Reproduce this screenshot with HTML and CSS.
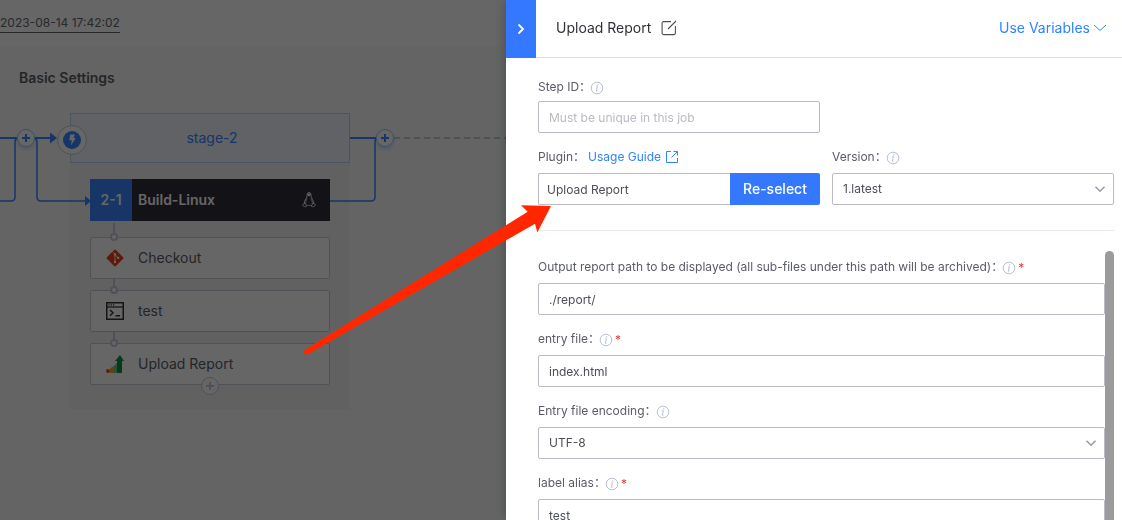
FILE: index.html
```html
<!DOCTYPE html>
<html lang="en">
<head>
<meta charset="utf-8">
<title>Pipeline editor - Upload Report</title>
<link rel="stylesheet" href="styles.css">
</head>
<body>
<svg class="sprite" aria-hidden="true">
  <symbol id="i-info" viewBox="0 0 14 14"><circle cx="7" cy="7" r="5.8" fill="none" stroke="currentColor"/><path d="M6.2 5.8h1.2L6.3 10.2h1.2" fill="none" stroke="currentColor"/><circle cx="7.8" cy="3.9" r=".7" fill="currentColor"/></symbol>
  <symbol id="i-down" viewBox="0 0 12 12"><path d="M1.5 3.8 6 8.3l4.5-4.5" fill="none" stroke="currentColor" stroke-width="1.5"/></symbol>
</svg>

<main class="page">
  <header class="topbar"><a class="version" href="#">2023-08-14 17:42:02</a></header>
  <section class="canvas">
    <h2 class="canvas-title">Basic Settings</h2>

    <article class="stage">
      <h3 class="stage-head">stage-2</h3>
      <span class="trigger"><svg width="18" height="18" viewBox="0 0 18 18"><circle cx="9" cy="9" r="9" fill="#3a84ff"/><path d="M7.300 3.500h4.600L10.500 7h2.300l-4.900 7.500.9-5.200H6.200z" fill="#fff"/></svg></span>
      <div class="job">
        <div class="job-head">
          <span class="job-num">2-1</span>
          <span class="job-name">Build-Linux</span>
          <svg class="tux" width="14" height="18" viewBox="0 0 14 18" fill="none" stroke="#fff"><path d="M5 5C4.700 0 9.300 0 9 5c.2 2.400 2.700 4 2.700 7.500M5 5c-.2 2.400-2.700 4-2.700 7.500" stroke-width=".9"/><path d="M5 7.500c-.7 2-1.800 3-1.200 6M9 7.500c.7 2 1.800 3 1.200 6M4.500 14.300h5M1 13l1.800-.6 2 2.600-1 1L.7 14.800zM13 13l-1.800-.6-2 2.600 1 1 3.100-1.200z" stroke-width=".7"/><path d="M5.300 2.500h3.400L8.500 4 7 5.600 5.500 4z" fill="#fff" stroke="none"/></svg>
        </div>
        <ul class="steps">
          <li class="step">
            <svg width="18" height="18" viewBox="0 0 18 18"><rect x="2.700" y="2.700" width="12.600" height="12.600" rx="1.200" transform="rotate(45 9 9)" fill="#f03c18"/><path d="M6.600 2.800 9 5.200v8M9 5.700l3 3" fill="none" stroke="#fff" stroke-width=".9"/><g fill="#fff"><circle cx="9" cy="5.500" r="1.200"/><circle cx="9" cy="13" r="1.200"/><circle cx="12.200" cy="8.900" r="1.200"/></g></svg>
            <span>Checkout</span>
          </li>
          <li class="step">
            <svg width="18" height="18" viewBox="0 0 18 18" fill="none" stroke="#333"><rect x=".75" y=".75" width="16.500" height="16.500" stroke-width="1.500"/><path d="M1 5h16" stroke-width="1.300"/><path d="M2.500 2.900h1.200M4.800 2.900H6M7 2.900h1.200" stroke-width="1.300"/><path d="m4 8 3 2.800L4 13.700M9.500 13.700H14" stroke-width="1.500"/></svg>
            <span>test</span>
          </li>
          <li class="step">
            <svg width="18" height="18" viewBox="0 0 18 18"><circle cx="2" cy="16" r="2" fill="#f04a24"/><path d="M4 13.500 8 11v7H4z" fill="#f5a623"/><path d="M8 11 11.500 7.500V18H8z" fill="#7cc690"/><path d="M11 18V6H9l5-6 4 6h-2v12z" fill="#12924a"/></svg>
            <span>Upload Report</span>
          </li>
        </ul>
        <button class="add add-step" aria-label="Add step"><svg width="10" height="10"><path d="M5 1v8M1 5h8" stroke="currentColor" stroke-width="2"/></svg></button>
      </div>
    </article>

    <svg class="wires" width="506" height="140" aria-hidden="true">
      <g fill="none" stroke="#3a84ff">
        <path d="M0 38h18M34 38h16M350 38h27" stroke-width="2"/>
        <path d="M0 101h11q4 0 4-4V42q0-3 3-4M34 38q3 1 3 4v55q0 4 4 4h44M330 101h41q4 0 4-4V42q0-3 3-4" stroke-width="1.500"/>
      </g>
      <path d="M50 32.500 57 38l-7 5.500zM85 96l6 5-6 5z" fill="#3a84ff"/>
      <path d="M394 38h112" stroke="#c3cdd7" stroke-width="2" stroke-dasharray="6 4"/>
    </svg>
    <button class="add add-before" aria-label="Add stage before"><svg width="10" height="10"><path d="M5 1v8M1 5h8" stroke="currentColor" stroke-width="2"/></svg></button>
    <button class="add add-after" aria-label="Add stage after"><svg width="10" height="10"><path d="M5 1v8M1 5h8" stroke="currentColor" stroke-width="2"/></svg></button>
  </section>
</main>

<div class="overlay">
  <aside class="panel">
    <header class="panel-head">
      <button class="collapse" aria-label="Close panel"><svg width="10" height="12" viewBox="0 0 10 12"><path d="m2.500 1.500 4.500 4.500-4.500 4.500" fill="none" stroke="#fff" stroke-width="1.800"/></svg></button>
      <h1 class="panel-title">Upload Report</h1>
      <button class="plain" aria-label="Edit name"><svg width="16" height="16" viewBox="0 0 16 16" fill="none" stroke="#4d4f56" stroke-width="1.100"><path d="M10 1.600H2.600a1.500 1.500 0 0 0-1.500 1.500v10a1.500 1.500 0 0 0 1.500 1.500h10.300a1.500 1.500 0 0 0 1.500-1.500V6M7 9l8-8"/></svg></button>
      <button class="plain variables">Use Variables <svg width="14" height="12" viewBox="0 0 14 12"><path d="m1 3 6 5.500L13 3" fill="none" stroke="currentColor"/></svg></button>
    </header>

    <form class="panel-body">
      <div class="pair">
        <div class="field">
          <div class="label label-short"><label for="step-id">Step ID：</label><svg class="info"><use href="#i-info"/></svg></div>
          <input class="box" id="step-id" type="text" placeholder="Must be unique in this job">
        </div>
      </div>
      <div class="pair">
        <div class="field">
          <div class="label label-linked"><label for="plugin">Plugin：</label><a class="guide" href="#">Usage Guide <svg width="14" height="14" viewBox="0 0 14 14" fill="none" stroke="currentColor"><path d="M6 1.500H1.500v11h11V8M8.500 1.500h4v4M12.500 1.500l-6 6"/></svg></a></div>
          <div class="picker"><input class="box" id="plugin" type="text" value="Upload Report"><button class="reselect" type="button">Re-select</button></div>
        </div>
        <div class="field">
          <div class="label"><label for="version">Version：</label><svg class="info"><use href="#i-info"/></svg></div>
          <div class="select"><select class="box" id="version"><option>1.latest</option></select><svg class="caret"><use href="#i-down"/></svg></div>
        </div>
      </div>
      <hr class="rule">
      <div class="scroller">
        <div class="fields">
          <div class="field">
            <div class="label"><label for="path">Output report path to be displayed (all sub-files under this path will be archived)：</label><svg class="info"><use href="#i-info"/></svg><span class="req">*</span></div>
            <input class="box" id="path" type="text" value="./report/">
          </div>
          <div class="field">
            <div class="label"><label for="entry">entry file：</label><svg class="info"><use href="#i-info"/></svg><span class="req">*</span></div>
            <input class="box" id="entry" type="text" value="index.html">
          </div>
          <div class="field">
            <div class="label"><label for="encoding">Entry file encoding：</label><svg class="info"><use href="#i-info"/></svg></div>
            <div class="select"><select class="box" id="encoding"><option>UTF-8</option></select><svg class="caret"><use href="#i-down"/></svg></div>
          </div>
          <div class="field">
            <div class="label"><label for="alias">label alias：</label><svg class="info"><use href="#i-info"/></svg><span class="req">*</span></div>
            <input class="box" id="alias" type="text" value="test">
          </div>
        </div>
        <div class="thumb"></div>
      </div>
    </form>
  </aside>
</div>

<svg class="pointer" width="260" height="160" viewBox="300 200 260 160" aria-hidden="true"><path d="M304.500 350 527.700 211.700 521 205.300 551 206 537.300 232.500 535 223.700 307.500 354.500Q302.500 355.500 304.500 350z" fill="#ff2600"/></svg>
</body>
</html>
```
FILE: styles.css
```css
*, ::before, ::after { box-sizing: border-box; }

body {
  margin: 0;
  height: 100vh;
  overflow: hidden;
  color: #5b5d66;
  font: 14px/20px Inter, "Noto Sans CJK SC", sans-serif;
}

h1, h2, h3, ul { margin: 0; padding: 0; font-size: inherit; list-style: none; }
button, input, select { font: inherit; }
button { padding: 0; cursor: pointer; }
svg { display: block; flex: none; }
.sprite { position: absolute; width: 0; height: 0; }

/* Pipeline behind the overlay */
.page { display: flex; flex-direction: column; height: 100%; background: #fff; }
.topbar { height: 46px; padding-top: 12px; }
.version {
  display: inline-block;
  border-bottom: 1px solid #63656e;
  color: #63656e;
  font-size: 12px;
  line-height: 18px;
  text-decoration: none;
}
.canvas { position: relative; flex: 1; background: #fafbfd; }
.canvas-title { padding: 22px 19px; font-weight: 600; }
.wires { position: absolute; top: 54px; left: 0; }

.add {
  position: absolute;
  display: grid;
  place-items: center;
  width: 18px;
  height: 18px;
  border: 1px solid #a3c5fd;
  border-radius: 50%;
  background: #fff;
  color: #3a84ff;
  box-shadow: 0 2px 4px #3a84ff4d;
}
.add-before { top: 83px; left: 17px; }
.add-after { top: 83px; left: 376px; }

.stage {
  position: absolute;
  top: 67px;
  left: 70px;
  width: 280px;
  padding-bottom: 24px;
  background: #f3f3f4;
}
.stage-head {
  border: 1px solid #b8d4fa;
  background: #eff5ff;
  color: #3a84ff;
  font-weight: 400;
  line-height: 48px;
  text-align: center;
  padding-left: 4px;
}
.trigger {
  position: absolute;
  top: 12px;
  left: -13px;
  display: grid;
  place-items: center;
  width: 30px;
  height: 30px;
  border: 1px solid #c3cdd7;
  border-radius: 50%;
  background: #fff;
}
.job { position: relative; margin: 16px 20px 0; }
.job-head { display: flex; align-items: center; height: 42px; padding-right: 14px; background: #2f2d3a; color: #fff; font-weight: 600; }
.job-num { width: 42px; background: #3a84ff; line-height: 42px; text-align: center; }
.job-name { flex: 1; padding-left: 6px; }
.steps { display: grid; gap: 11px; padding-top: 16px; }
.step {
  position: relative;
  display: flex;
  align-items: center;
  gap: 14px;
  height: 42px;
  padding-left: 15px;
  border: 1px solid #c3cdd7;
  border-radius: 2px;
  background: #fff;
}
.step::before {
  content: "";
  position: absolute;
  top: -15px;
  left: 22px;
  width: 2px;
  height: 12px;
  background: #c3cdd7;
}
.step:not(:first-child)::before { top: -12px; height: 9px; }
.step::after {
  content: "";
  position: absolute;
  top: -5px;
  left: 19px;
  width: 8px;
  height: 8px;
  border: 2px solid #c3cdd7;
  border-radius: 50%;
  background: #fff;
}
.add-step { bottom: -10px; left: 111px; border-color: #c3cdd7; color: #c3cdd7; box-shadow: none; }

/* Side panel */
.overlay {
  position: fixed;
  inset: 0;
  display: flex;
  justify-content: flex-end;
  background: rgba(0, 0, 0, .6);
}
.panel {
  display: flex;
  flex: 0 1 616px;
  flex-direction: column;
  min-width: 0;
  overflow: hidden;
  background: #fff;
  box-shadow: 0 0 12px rgba(0, 0, 0, .3);
}
.panel-head {
  display: flex;
  align-items: center;
  height: 58px;
  padding: 0 15px 1px 0;
  border-bottom: 1px solid #dcdee5;
  color: #313238;
}
.collapse { display: grid; place-items: center; align-self: stretch; width: 30px; margin: 0 20px -2px 0; border: 0; background: #3378ff; }
.panel-title { margin-right: 10px; font-weight: 400; }
.plain { border: 0; background: none; }
.variables { display: flex; align-items: center; gap: 3px; margin-left: auto; color: #2f84ff; }

.panel-body { display: flex; flex: 1; flex-direction: column; min-height: 0; padding: 15px 8px 0 32px; font-size: 12px; }
.pair { display: grid; grid-template-columns: 1fr 1fr; gap: 12px; margin-bottom: 8px; }
.label { display: flex; align-items: center; height: 32px; white-space: nowrap; }
.label-short { height: 28px; }
.label-linked { gap: 3px; }
.info { width: 14px; height: 14px; margin: 2px 0 0 -1px; color: #b6c2d6; }
.req { margin: 2px 0 0 2px; color: #ea3636; }
.guide { display: flex; align-items: center; gap: 4px; color: #2f84ff; text-decoration: none; }

.box {
  display: block;
  width: 100%;
  height: 32px;
  padding: 0 10px;
  border: 1px solid #b9bbc9;
  border-radius: 2px;
  outline: 0;
  appearance: none;
  background: #fff;
  color: #4d4f57;
}
.box::placeholder { color: #b9bbc2; }
.picker { display: flex; }
.picker .box { flex: 1; min-width: 0; padding: 0 8px; border-right: 0; border-radius: 2px 0 0 2px; }
.reselect { width: 90px; border: 0; border-radius: 0 2px 2px 0; background: #3378ff; color: #fff; font-size: 14px; font-weight: 500; }
.select { position: relative; }
.caret { position: absolute; top: 10px; right: 8px; width: 12px; height: 12px; color: #979ba5; pointer-events: none; }

.rule { width: 100%; margin: 17px 0 20px; border: 0; border-top: 1px solid #e6e9f0; }
.scroller { display: grid; grid-template-columns: 1fr 9px; flex: 1; min-height: 0; overflow: hidden; }
.fields { display: grid; align-content: start; gap: 8px; min-width: 0; }
.thumb { border-radius: 5px 5px 0 0; background: #9b9b9b; }

/* Annotation arrow from the step to the plugin field */
.pointer { position: fixed; top: 200px; left: 300px; pointer-events: none; }
```
